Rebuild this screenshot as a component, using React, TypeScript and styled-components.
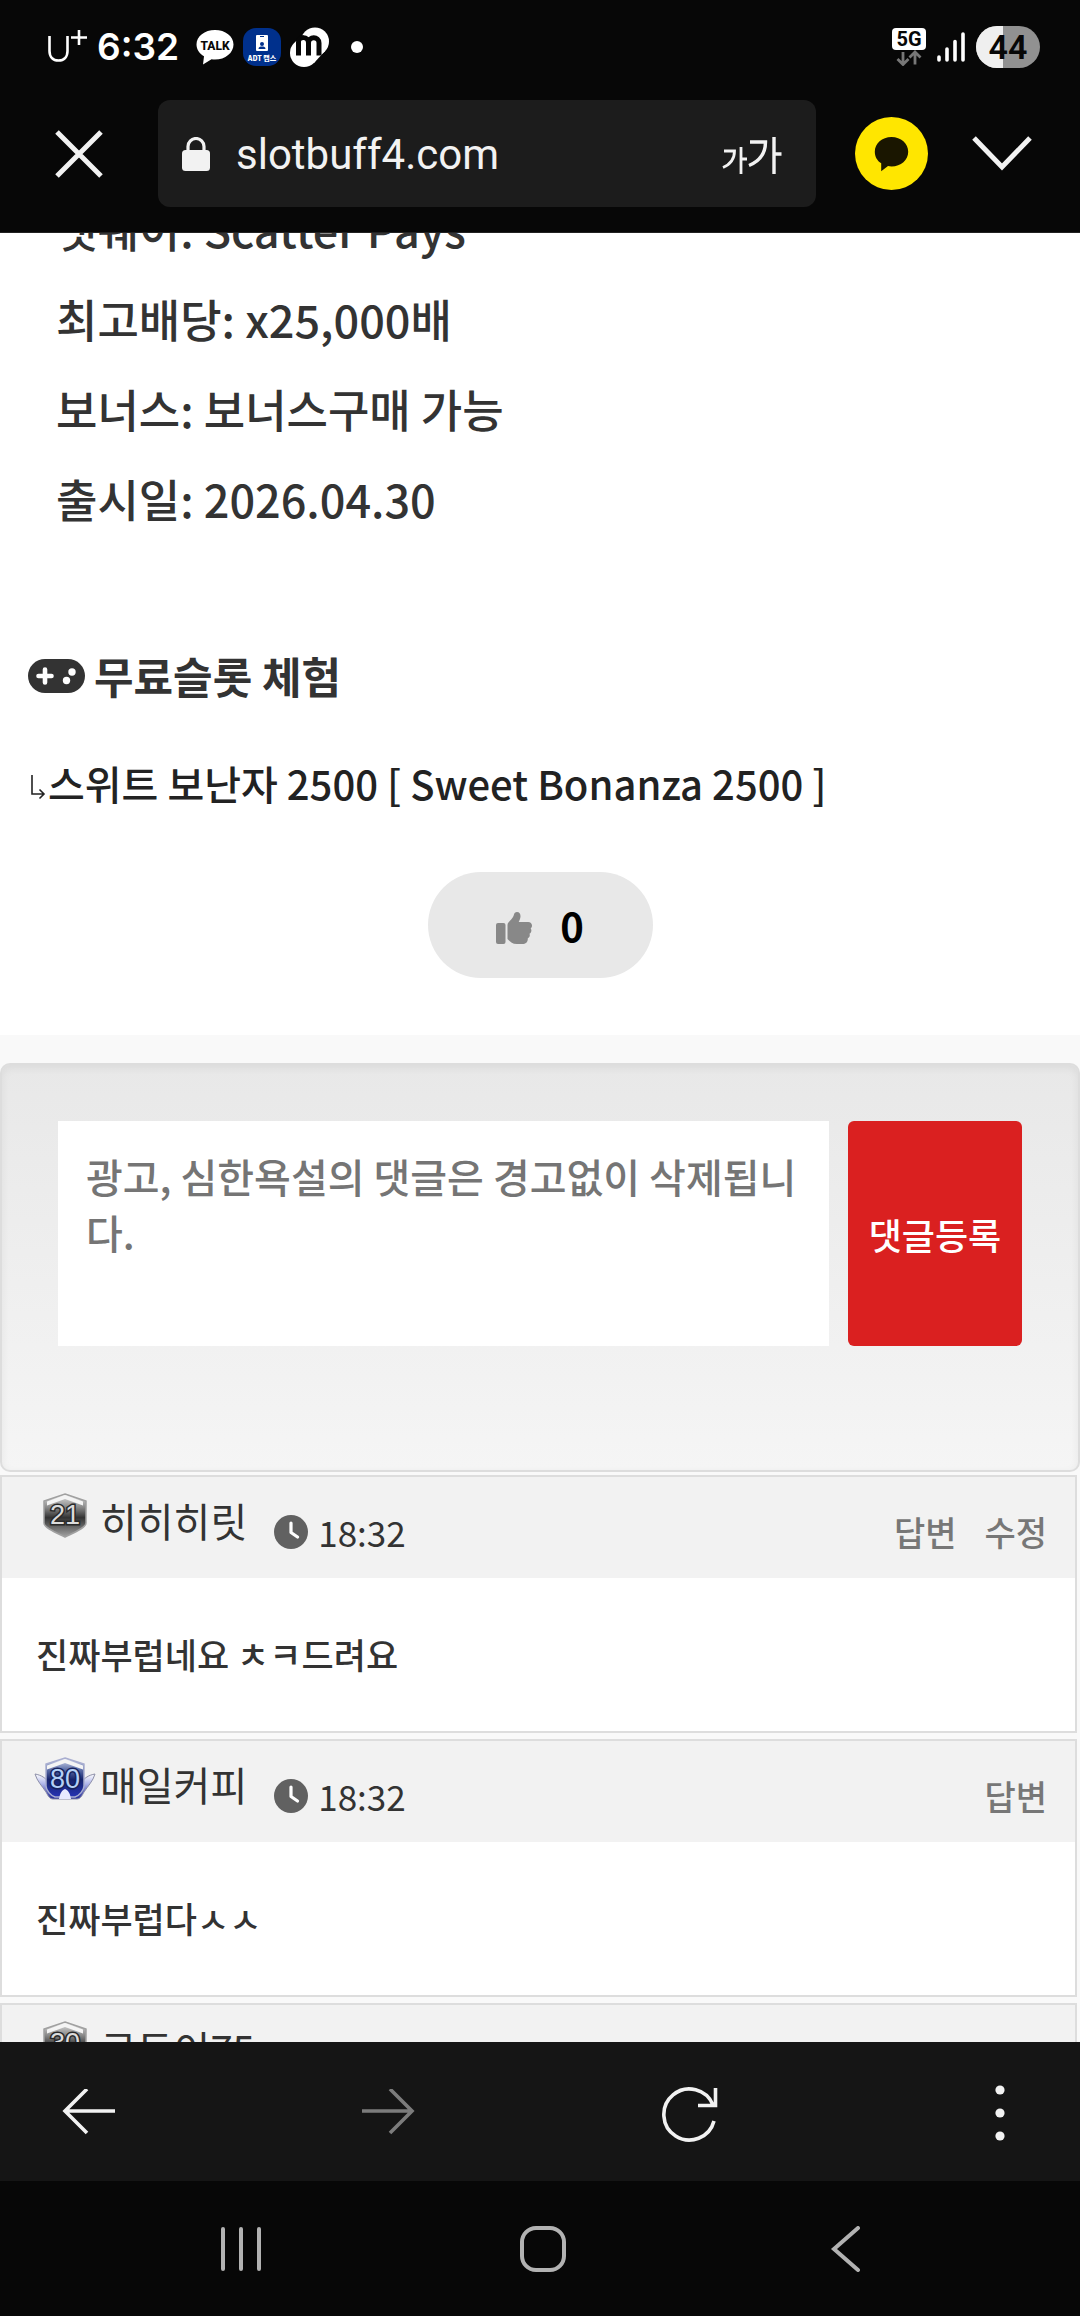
import React from 'react';
import styled, { createGlobalStyle } from 'styled-components';

const GlobalStyle = createGlobalStyle`
	* {
		box-sizing: border-box;
	}
	body {
		margin: 0;
		background: #070707;
		color: #333;
		font-family: "Noto Sans CJK KR", "Noto Sans", sans-serif;
		font-weight: 500;
	}
	button {
		padding: 0;
		border: none;
		background: none;
		color: inherit;
		font: inherit;
	}
	a {
		color: inherit;
		text-decoration: none;
	}
	svg {
		display: block;
		flex: none;
	}
`;

const Screen = styled.div`
	display: flex;
	flex-direction: column;
	height: 100vh;
`;

const StatusBar = styled.div`
	display: flex;
	align-items: center;
	justify-content: space-between;
	height: 94px;
	padding: 0 40px 0 48px;
	color: #fff;
	font-family: Inter, sans-serif;
`;

const StatusGroup = styled.div<{ $gap: number }>`
	display: flex;
	align-items: center;
	gap: ${p => p.$gap}px;
`;

const Time = styled.span`
	margin-right: 8px;
	font-size: 37px;
	font-weight: 600;
	line-height: 48px;
`;

const AddressBar = styled.header`
	display: flex;
	align-items: center;
	height: 139px;
	padding: 6px 48px 25px 55px;
	border-bottom: 1px solid #222;
	color: #f2f2f2;
`;

const AddressField = styled.div`
	flex: 1;
	display: flex;
	align-items: center;
	height: 107px;
	margin: 0 39px 0 55px;
	padding: 0 34px 0 24px;
	border-radius: 12px;
	background: #1c1c1c;
`;

const Address = styled.span`
	flex: 1;
	margin-left: 26px;
	padding-top: 2px;
	font-family: Roboto, sans-serif;
	font-size: 42px;
	font-weight: 400;
	line-height: 56px;
`;

const Viewport = styled.main`
	flex: 1;
	min-height: 0;
	overflow: hidden;
	background: #f9f9f9;
`;

// scrolled part way into the post, so the first line is cut by the header
const Article = styled.article`
	margin-top: -49px;
	padding: 0 28px 57px;
	background: #fff;
`;

const Facts = styled.ul`
	margin: 0;
	padding: 0 28px;
	list-style: none;
	font-size: 45px;
	line-height: 90px;
`;

const Heading = styled.h2`
	display: flex;
	align-items: center;
	gap: 9px;
	margin: 99px 0 46px;
	font-size: 43px;
	font-weight: 700;
	line-height: 64px;
`;

const SlotLink = styled.a`
	display: flex;
	align-items: center;
	color: #222;
	font-size: 40px;
	line-height: 60px;
`;

const LikeButton = styled.button`
	display: flex;
	align-items: center;
	justify-content: center;
	gap: 28px;
	width: 225px;
	height: 106px;
	margin: 59px auto 0;
	border-radius: 53px;
	background: #e8e8e8;
	color: #000;
	font-size: 40px;
	font-weight: 700;
	line-height: 60px;
`;

const CommentForm = styled.form`
	display: flex;
	align-items: flex-start;
	gap: 19px;
	margin: 28px 0 3px;
	padding: 56px 56px 124px;
	border: 2px solid #ddd;
	border-radius: 10px;
	background: linear-gradient(#e8e8e8, #f5f5f5);
	box-shadow: inset 0 3px 9px rgba(0, 0, 0, .06);
`;

const CommentInput = styled.textarea`
	flex: 1;
	min-width: 0;
	height: 225px;
	padding: 27px 28px;
	border: none;
	border-radius: 0;
	background: #fff;
	color: #333;
	font: inherit;
	font-size: 40px;
	line-height: 56px;
	word-break: break-all;
	resize: none;
	outline: none;
	overflow: hidden;
	&::placeholder {
		color: #757575;
	}
`;

const SubmitButton = styled.button`
	width: 174px;
	height: 225px;
	border-radius: 6px;
	background: #da2020;
	color: #fff;
	font-size: 36px;
	line-height: 56px;
`;

const CommentList = styled.ul`
	display: flex;
	flex-direction: column;
	gap: 6px;
	margin: 0;
	padding: 0 3px 0 0;
	list-style: none;
`;

const Comment = styled.li`
	border: 2px solid #ddd;
	background: #fff;
`;

const CommentHead = styled.div`
	display: flex;
	align-items: flex-start;
	height: 101px;
	padding: 0 28px 0 32px;
	background: #f2f2f2;
`;

const Badge = styled.svg`
	margin-top: 15px;
`;

const Name = styled.span`
	margin: 15px 27px 0 4px;
	color: #333;
	font-size: 40px;
	font-weight: 400;
	line-height: 56px;
`;

const Posted = styled.time`
	display: flex;
	align-items: center;
	gap: 10px;
	margin-top: 27px;
	font-size: 35px;
	font-weight: 400;
	line-height: 56px;
`;

const Actions = styled.div`
	display: flex;
	gap: 28px;
	margin: 27px 0 0 auto;
	color: #777;
	font-size: 34px;
	line-height: 56px;
`;

const CommentBody = styled.p`
	margin: 0;
	padding: 48px 34px 49px;
	font-size: 35px;
	line-height: 56px;
`;

const Toolbar = styled.nav`
	display: flex;
	align-items: center;
	justify-content: space-between;
	height: 139px;
	padding: 2px 54px 0 60px;
	background: #151515;
	color: #f2f2f2;
`;

const SystemNav = styled.nav`
	display: flex;
	align-items: center;
	justify-content: space-between;
	height: 135px;
	padding: 0 216px;
	color: #b2b2b2;
`;

const TalkIcon = () => (
	<svg width="38" height="38" viewBox="0 0 38 38">
		<path d="M19 2C8.600 2 .5 8.200 .5 16.500c0 5 3 9.200 7.500 11.800L7 36.500l8.500-5.200c1.200.2 2.300.3 3.500.3 10.400 0 18.500-6.900 18.500-15.100S29.400 2 19 2z" fill="#fff" />
		<text x="19" y="22" textAnchor="middle" fontFamily="Roboto, sans-serif" fontSize="12" fontWeight="800" fill="#070707">TALK</text>
	</svg>
);

const AdtIcon = () => (
	<svg width="38" height="38" viewBox="0 0 38 38">
		<rect width="38" height="38" rx="13" fill="#00308c" />
		<rect x="13" y="7" width="12" height="16" rx="1" fill="#fff" />
		<path d="M17 8.500h4" stroke="#00308c" strokeWidth="1" />
		<circle cx="19" cy="16" r="2" fill="#00308c" />
		<path d="M15.500 21c0-2 1.500-2.500 3.500-2.500s3.500.5 3.500 2.500z" fill="#00308c" />
		<text x="19" y="33" textAnchor="middle" fontFamily='"Noto Sans CJK KR", sans-serif' fontSize="7" fontWeight="900" fill="#fff">ADT 캡스</text>
	</svg>
);

const MIcon = () => (
	<svg width="40" height="40" viewBox="0 0 40 40">
		<circle cx="25" cy="14.500" r="14" fill="#fff" />
		<circle cx="14" cy="26" r="14" fill="#fff" />
		<path d="M35 24L24 36 18 30 30 18z" fill="#fff" />
		<path d="M8.500 28.500V15c0-6 10-6 10 1v12.500M18.500 16c0-7 10.500-7 10.500 0v12.500" fill="none" stroke="#070707" strokeWidth="5" />
	</svg>
);

const UPlusIcon = () => (
	<svg width="40" height="34" viewBox="0 0 40 34" fill="none" stroke="#fff">
		<path d="M1.500 6v15c0 6 3.500 9.500 9 9.500s9-3.500 9-9.500V6" strokeWidth="2.600" />
		<path d="M31 0v15M23 7.500h16" strokeWidth="2.600" />
	</svg>
);

const NetworkIcon = () => (
	<svg width="34" height="38" viewBox="0 0 34 38">
		<rect width="34" height="22" rx="4" fill="#fff" />
		<text x="17" y="18" textAnchor="middle" fontFamily="Roboto, sans-serif" fontSize="20" fontWeight="700" fill="#070707">5G</text>
		<path d="M11 24v12M5.500 31l5.500 5.500L16.500 31M23 36.500V24M17.500 29.500L23 24l5.500 5.500" fill="none" stroke="#777" strokeWidth="2.800" />
	</svg>
);

const SignalIcon = () => (
	<svg width="28" height="30" viewBox="0 0 28 30" stroke="#fff" strokeWidth="3.600" strokeLinecap="round">
		<path d="M2 25v3M10 17v11M18 9.500V28M26 2v26" />
	</svg>
);

const BatteryIcon = () => (
	<svg width="64" height="42" viewBox="0 0 64 42">
		<rect width="64" height="42" rx="21" fill="#919191" />
		<path d="M27 0H21a21 21 0 0 0 0 42h6z" fill="#efefef" />
		<text x="32" y="33" textAnchor="middle" fontFamily="Roboto, sans-serif" fontSize="34" fontWeight="600" fill="#070707">44</text>
	</svg>
);

const CloseIcon = () => (
	<svg width="48" height="48" viewBox="0 0 48 48" stroke="currentColor" strokeWidth="5">
		<path d="M2 2l44 44M46 2L2 46" />
	</svg>
);

const LockIcon = () => (
	<svg width="28" height="34" viewBox="0 0 28 34">
		<rect y="13" width="28" height="21" rx="3.500" fill="#f2f2f2" />
		<path d="M6 14V9.500a8 8 0 0 1 16 0V14" fill="none" stroke="#f2f2f2" strokeWidth="3.200" />
	</svg>
);

const TextSizeIcon = () => (
	<svg width="60" height="40" viewBox="0 0 60 40" fill="none" stroke="#f2f2f2">
		<path d="M2 17h10.500c0 8-3.500 13-11.500 16.500M19 13v27M19 25h6" strokeWidth="2.800" />
		<path d="M28 8h15.500c0 11.500-5.500 19-16.500 23.500M52 3v37M52 20h7.500" strokeWidth="3.400" />
	</svg>
);

const KakaoIcon = () => (
	<svg width="73" height="73" viewBox="0 0 73 73">
		<circle cx="36.500" cy="36.500" r="36.500" fill="#ffe600" />
		<path d="M36.500 20c-9.500 0-16.700 6.500-16.700 14.700 0 4.900 2.400 9 6.400 11.600v8l6.800-5.200c1.100.2 2.300.3 3.500.3 9.500 0 16.700-6.500 16.700-14.700S46 20 36.500 20z" fill="#1a1600" />
	</svg>
);

const ChevronIcon = () => (
	<svg width="60" height="36" viewBox="0 0 60 36" fill="none" stroke="currentColor" strokeWidth="5">
		<path d="M2 2l28 29L58 2" />
	</svg>
);

const GamepadIcon = () => (
	<svg width="57" height="36" viewBox="0 0 57 36">
		<rect y="2" width="57" height="34" rx="17" fill="#333" />
		<path d="M17 12.500v13M10.500 19h13" stroke="#fff" strokeWidth="4.600" strokeLinecap="round" />
		<circle cx="38.500" cy="23.500" r="3.700" fill="#fff" />
		<circle cx="44" cy="15" r="3.700" fill="#fff" />
	</svg>
);

const ReplyArrowIcon = () => (
	<svg width="20" height="34" viewBox="0 0 20 34" fill="none" stroke="#222" strokeWidth="1.600">
		<path d="M4 9v19h12M11.500 23.500L16 28l-4.500 4.500" />
	</svg>
);

const ThumbIcon = () => (
	<svg width="36" height="38" viewBox="0 0 36 38" fill="#888">
		<rect y="17" width="9.500" height="21" rx="2" />
		<path d="M11.500 33V19.500c0-2 .8-3 2-4.200C16.500 12 17.500 10.500 18 8.500 18.300 7 19.300 6 21 6c2.400 0 3.500 2 3.500 4.200 0 2.300-1 4-1.800 5.800h9.500c2.200 0 3.800 1.600 3.800 3.500 0 1.300-.5 2.200-1.300 2.900.5.700.7 1.400.7 2.200 0 1.500-.8 2.600-1.900 3.200.2.500.3 1 .3 1.500 0 1.400-.8 2.500-2 3 .2 3.800-2 5.700-5.500 5.700h-5.500c-4.500 0-6.500-2-9.300-5z" />
	</svg>
);

const ClockIcon = () => (
	<svg width="34" height="34" viewBox="0 0 34 34">
		<circle cx="17" cy="17" r="17" fill="#616161" />
		<path d="M17 8v9.500l6.500 4.500" fill="none" stroke="#fff" strokeWidth="3.200" strokeLinecap="round" strokeLinejoin="round" />
	</svg>
);

interface LevelBadgeProps {
	level: number;
	winged?: boolean;
}

const LevelBadge: React.FC<LevelBadgeProps> = ({ level, winged }) => {
	const id = `level-${level}`;
	return (
		<Badge width="62" height="46" viewBox="0 0 62 46">
			<defs>
				<linearGradient id={id} x1="0" y1="0" x2="0" y2="1">
					<stop offset="0" stopColor={winged ? '#dfe3f4' : '#e4e4e4'} />
					<stop offset=".3" stopColor={winged ? '#5c6ea8' : '#8c8c8c'} />
					<stop offset=".55" stopColor={winged ? '#17246c' : '#333'} />
					<stop offset="1" stopColor={winged ? '#2633b4' : '#a2a2a2'} />
				</linearGradient>
				<linearGradient id={`${id}-wing`} x1="0" y1="0" x2="0" y2="1">
					<stop offset="0" stopColor="#fff" />
					<stop offset=".4" stopColor="#aeb4ea" />
					<stop offset="1" stopColor="#1c2494" />
				</linearGradient>
			</defs>
			{winged && (
				<path d="M1 18c6 1 11 4 14 9l2 6h28l2-6c3-5 8-8 14-9-2 7-7 12-11 18-2 4-4 7-7 7H19c-3 0-5-3-7-7C8 30 3 25 1 18z" fill={`url(#${id}-wing)`} stroke="#8d8fa8" strokeWidth="1" />
			)}
			<path
				d={winged ? 'M31 2l19 6v22c0 4-5 10-9 11H21c-4-1-9-7-9-11V8z' : 'M31 2l21 7v22c0 5-13 10-21 14-8-4-21-9-21-14V9z'}
				fill={`url(#${id})`}
				stroke={winged ? '#a9aed0' : '#a0a0a0'}
				strokeWidth="1.500"
			/>
			<path d="M31 3l18 6.500v4L31 7 13 13.500v-4z" fill="#f4f4f4" />
			<text x="31" y="32" textAnchor="middle" fontFamily="Liberation Sans, sans-serif" fontSize="27" fontWeight="400" fill={winged ? '#b4d0f6' : '#dcdcdc'} stroke={winged ? '#16225c' : '#2a2a2a'} strokeWidth="3" paintOrder="stroke">{level}</text>
			{winged && <path d="M25 43c1-6 3-9 6-10 3 1 5 4 6 10z" fill="#e8eaff" />}
		</Badge>
	);
};

const facts = [
	'뱃웨이: Scatter Pays',
	'최고배당: x25,000배',
	'보너스: 보너스구매 가능',
	'출시일: 2026.04.30',
];

const comments = [
	{ name: '히히히릿', level: 21, time: '18:32', text: '진짜부럽네요 ㅊㅋ드려요', actions: ['답변', '수정'] },
	{ name: '매일커피', level: 80, winged: true, time: '18:32', text: '진짜부럽다ㅅㅅ', actions: ['답변'] },
	{ name: '구두이75', level: 30 },
];

const App: React.FC = () => (
	<Screen>
		<GlobalStyle />
		<StatusBar>
			<StatusGroup $gap={9}>
				<UPlusIcon />
				<Time>6:32</Time>
				<TalkIcon />
				<AdtIcon />
				<MIcon />
				<svg width="36" height="12" viewBox="0 0 36 12"><circle cx="18" cy="6" r="6" fill="#fff" /></svg>
			</StatusGroup>
			<StatusGroup $gap={11}>
				<NetworkIcon />
				<SignalIcon />
				<BatteryIcon />
			</StatusGroup>
		</StatusBar>
		<AddressBar>
			<button aria-label="닫기"><CloseIcon /></button>
			<AddressField>
				<LockIcon />
				<Address>slotbuff4.com</Address>
				<button aria-label="글자 크기"><TextSizeIcon /></button>
			</AddressField>
			<StatusGroup $gap={44}>
				<button aria-label="공유"><KakaoIcon /></button>
				<button aria-label="내리기"><ChevronIcon /></button>
			</StatusGroup>
		</AddressBar>
		<Viewport>
			<Article>
				<Facts>
					{facts.map(f => <li key={f}>{f}</li>)}
				</Facts>
				<Heading><GamepadIcon />무료슬롯 체험</Heading>
				<SlotLink href="#slot"><ReplyArrowIcon />스위트 보난자 2500 [ Sweet Bonanza 2500 ]</SlotLink>
				<LikeButton><ThumbIcon />0</LikeButton>
			</Article>
			<CommentForm onSubmit={e => e.preventDefault()}>
				<CommentInput aria-label="댓글" placeholder="광고, 심한욕설의 댓글은 경고없이 삭제됩니다." />
				<SubmitButton>댓글등록</SubmitButton>
			</CommentForm>
			<CommentList>
				{comments.map(c => (
					<Comment key={c.name}>
						<CommentHead>
							<LevelBadge level={c.level} winged={c.winged} />
							<Name>{c.name}</Name>
							{c.time && <Posted><ClockIcon />{c.time}</Posted>}
							{c.actions && (
								<Actions>
									{c.actions.map(a => <a key={a} href="#comment">{a}</a>)}
								</Actions>
							)}
						</CommentHead>
						{c.text && <CommentBody>{c.text}</CommentBody>}
					</Comment>
				))}
			</CommentList>
		</Viewport>
		<Toolbar>
			<button aria-label="뒤로">
				<svg width="56" height="48" viewBox="0 0 56 48" fill="none" stroke="currentColor" strokeWidth="3.600">
					<path d="M55 22H5M27 0L5 22l22 22" />
				</svg>
			</button>
			<button aria-label="앞으로">
				<svg width="56" height="48" viewBox="0 0 56 48" fill="none" stroke="#7c7c7c" strokeWidth="3.600">
					<path d="M1 22h50M29 0l22 22-22 22" />
				</svg>
			</button>
			<button aria-label="새로고침">
				<svg width="68" height="58" viewBox="0 0 68 58" fill="none" stroke="currentColor" strokeWidth="3.600">
					<path d="M53 37A25.500 25.500 0 1 1 52 21M54.500 4v17.500H37" />
				</svg>
			</button>
			<button aria-label="더보기">
				<svg width="52" height="56" viewBox="0 0 52 56" fill="currentColor">
					<circle cx="26" cy="5" r="4.600" />
					<circle cx="26" cy="28" r="4.600" />
					<circle cx="26" cy="51" r="4.600" />
				</svg>
			</button>
		</Toolbar>
		<SystemNav>
			<button aria-label="최근 앱">
				<svg width="50" height="46" viewBox="0 0 50 46" stroke="currentColor" strokeWidth="4" strokeLinecap="round">
					<path d="M7 3v40M25 3v40M43 3v40" />
				</svg>
			</button>
			<button aria-label="홈">
				<svg width="56" height="46" viewBox="0 0 56 46" fill="none" stroke="currentColor" strokeWidth="4">
					<rect x="10" y="2" width="42" height="42" rx="14" />
				</svg>
			</button>
			<button aria-label="이전">
				<svg width="50" height="46" viewBox="0 0 50 46" fill="none" stroke="currentColor" strokeWidth="4" strokeLinecap="round">
					<path d="M44 2L20 23l24 21" />
				</svg>
			</button>
		</SystemNav>
	</Screen>
);

export default App;
